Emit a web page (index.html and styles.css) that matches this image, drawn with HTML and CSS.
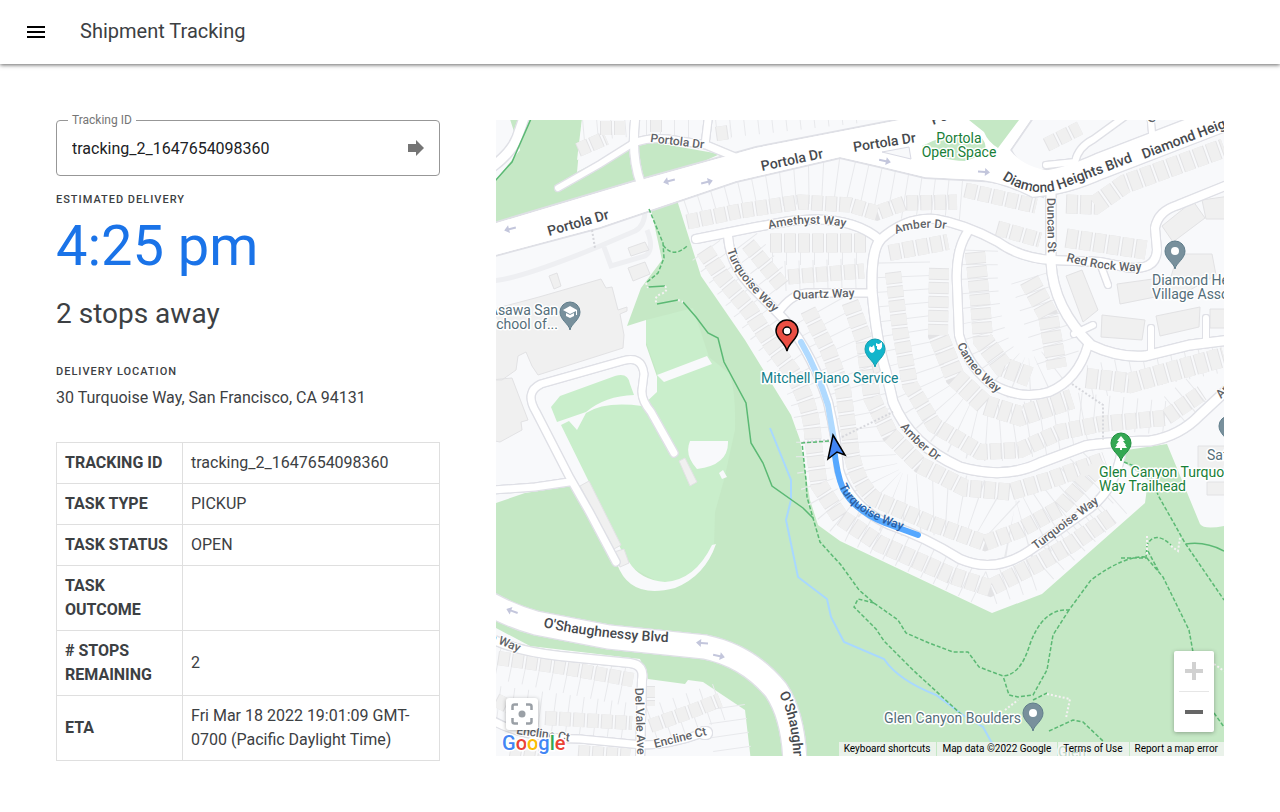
FILE: index.html
```html
<!DOCTYPE html>
<html lang="en">
<head>
<meta charset="utf-8">
<meta name="viewport" content="width=device-width, initial-scale=1">
<title>Shipment Tracking</title>
<link rel="stylesheet" href="styles.css">
</head>
<body>
<header class="topbar">
  <button class="menu-button" type="button" aria-label="Menu">
    <svg width="24" height="24" viewBox="0 0 24 24"><path d="M3 18h18v-2H3v2zm0-5h18v-2H3v2zm0-7v2h18V6H3z"/></svg>
  </button>
  <h1 class="title">Shipment Tracking</h1>
</header>
<main class="content">
  <section class="details">
    <form class="field">
      <label class="field-label" for="tracking">Tracking ID</label>
      <input class="field-input" id="tracking" type="text" value="tracking_2_1647654098360">
      <button class="field-go" type="button" aria-label="Track">
        <svg width="18" height="16" viewBox="0 0 18 16"><path d="M1 4h8V0l8 8-8 8v-4H1z"/></svg>
      </button>
    </form>
    <h2 class="caption">ESTIMATED DELIVERY</h2>
    <p class="time">4:25 pm</p>
    <p class="stops">2 stops away</p>
    <h2 class="caption caption-location">DELIVERY LOCATION</h2>
    <p class="address">30 Turquoise Way, San Francisco, CA 94131</p>
    <table class="facts">
      <tr><th scope="row">TRACKING ID</th><td>tracking_2_1647654098360</td></tr>
      <tr><th scope="row">TASK TYPE</th><td>PICKUP</td></tr>
      <tr><th scope="row">TASK STATUS</th><td>OPEN</td></tr>
      <tr><th scope="row">TASK OUTCOME</th><td></td></tr>
      <tr><th scope="row"># STOPS REMAINING</th><td>2</td></tr>
      <tr><th scope="row">ETA</th><td>Fri Mar 18 2022 19:01:09 GMT-0700 (Pacific Daylight Time)</td></tr>
    </table>
  </section>
  <section class="map" aria-label="Map">
    <svg class="map-canvas" viewBox="496 120 728 636" preserveAspectRatio="xMidYMid slice">
      <defs>
        <g id="roads">
          <path stroke-width="9" d="M526 112L517 138Q511 153 492 167"/>
          <path stroke-width="6" d="M558 188L600 164 635 142"/>
          <path stroke-width="8" d="M636 112Q630 155 641 184"/>
          <path stroke-width="7" d="M633 143Q650 137 668 139L706 145 735 157M709 112L705 145"/>
          <path stroke-width="8" d="M696 239L756 227 790 221Q850 214 880 240Q905 217 935 219Q965 224 998 242Q1020 258 1052 260L1100 262 1125 267Q1156 272 1157 250L1155 228Q1158 211 1178 205L1230 184"/>
          <path stroke-width="9" d="M880 240Q871 251 872 290Q876 340 886 372L893 402Q910 445 960 467Q1005 480 1040 463L1085 446Q1105 442 1150 441Q1180 436 1200 415L1230 387"/>
          <path stroke-width="8" d="M967 233Q955 252 957 285L959 335Q967 364 990 383Q1020 401 1049 392Q1078 380 1088 345"/>
          <path stroke-width="9" d="M1051 190L1051 262Q1053 308 1091 345Q1118 358 1145 356L1190 345 1230 340"/>
          <path stroke-width="6" d="M1151 352V328M1206 340V318M1074 334L1093 325M1101 266L1108 285"/>
          <path stroke-width="7" d="M872 293H807Q791 294 778 313"/>
          <path stroke-width="8" d="M728 236Q730 264 750 285L776 311Q808 342 828 402Q837 440 839 470Q850 507 890 525Q925 537 960 559Q995 574 1029 551L1090 508Q1116 488 1122 449"/>
          <path stroke-width="6" d="M1046 165L1075 162Q1078 147 1094 139L1131 112M1153 143L1150 112"/>
          <path stroke-width="7" d="M616 562L590 513 570 478 536 412Q524 392 541 384L622 361Q642 355 644 374L642 390Q641 400 651 412L674 453M492 490L535 487 569 482"/>
          <path stroke-width="8" d="M490 638Q515 651 560 656L630 663Q645 665 642 680L640 762"/>
          <path stroke-width="7" d="M488 718Q520 738 580 739L642 745Q670 745 700 734"/>
          <path stroke-width="12" d="M704 733h2"/>
          <path stroke-width="23" d="M484 601Q510 616 536 623L609 637 705 647Q748 656 776 690Q794 717 795 765"/>
          <path stroke-width="25" d="M970 166Q1003 168 1035 184Q1065 182 1100 166L1235 114"/>
        </g>
        <g id="lots">
          <path stroke-width="48" d="M685 205Q790 170 850 184T965 202"/>
          <path stroke-width="30" d="M772 250H864M785 276L865 273M745 242L780 288"/>
          <path stroke-width="34" d="M706 250L750 310 790 365Q815 400 813 450T850 525L985 590 1035 573 1120 497"/>
          <path stroke-width="62" d="M820 310Q865 390 865 450T920 505 1000 525 1105 468"/>
          <path stroke-width="56" d="M902 262Q904 360 930 400T1010 432 1085 420"/>
          <path stroke-width="44" d="M976 250Q973 335 1000 365T1060 365L1030 270"/>
          <path stroke-width="34" d="M1080 410L1165 418 1205 385M1090 382L1224 355"/>
          <path stroke-width="38" d="M498 660L632 688M498 705L630 722M652 725L725 700 733 756"/>
          <path stroke-width="22" d="M583 130L628 126M646 128H700M716 128L860 112"/>
        </g>
        <g id="houses">
          <path stroke-width="15" d="M687 222L740 211 800 202 850 205 877 213 905 203 957 202M965 190L1036 206M997 228L1040 240"/>
          <path stroke-width="19" d="M770 243H866M1066 204L1095 205 1125 184 1224 148M1066 238L1146 250"/>
          <path stroke-width="15" d="M788 277L864 271M748 244L783 287"/>
          <path stroke-width="17" d="M704 250L722 277 750 311 772 345 792 372Q812 405 813 440L819 485 840 517 880 544 950 575 990 588 1035 565 1070 545 1112 516"/>
          <path stroke-width="16" d="M808 310L828 350 843 390 850 440Q853 480 875 499L930 523 985 543 1020 530 1060 508 1103 462"/>
          <path stroke-width="17" d="M850 302L864 340 872 398 890 435 920 465 965 488 1010 492 1050 480 1105 460"/>
          <path stroke-width="16" d="M889 253L948 242M893 272L900 330 910 385 934 425 980 452 1020 450 1060 432 1100 424 1165 418 1202 393"/>
          <path stroke-width="20" d="M939 268L938 335 955 377 985 405 1020 416 1072 399"/>
          <path stroke-width="20" d="M975 252L980 300 983 340 1003 367 1030 377M1029 280L1048 315 1057 368"/>
          <path stroke-width="20" d="M1086 378L1130 383 1224 357"/>
          <path stroke-width="14" d="M498 658L560 667 633 680M545 718L632 723M650 726L695 710 720 700M648 686V706M578 752L630 756M496 700L520 712M510 750L545 756"/>
          <path stroke-width="14" d="M578 150L606 138M600 128L625 128M650 125H664M716 134L730 132M1046 145L1080 128"/>
        </g>
        <path id="p-amethyst" d="M769 229Q810 219 850 228"/>
        <path id="p-amber" d="M896 234Q920 224 950 230"/>
        <path id="p-turq1" d="M727 250Q735 279 777 315"/>
        <path id="p-cameo" d="M957 345Q970 375 1004 398"/>
        <path id="p-amber2" d="M900 427Q916 448 945 466"/>
        <path id="p-turq2" d="M839 486Q852 517 915 534"/>
        <path id="p-diamond" d="M1002 179Q1035 201 1068 186L1145 157"/>
        <path id="p-redrock" d="M1066 261Q1110 273 1150 271"/>
        <path id="p-oshau" d="M543 627Q600 640 690 643"/>
        <path id="p-oshau2" d="M779 694Q794 722 794 775"/>
        <path id="pin" d="M0 18C-1 12-10 8-10 0A10 10 0 1 1 10 0C10 8 1 12 0 18z"/>
        <path id="way-arrow" d="M-6 0L-1-4V-1H6V1H-1V4z"/>
      </defs>

      <rect class="land" x="0" y="0" width="1800" height="1400"/>

      <path class="park" d="M507 110H583L577 172 640 140 720 154 640 190 496 224V180L520 150z"/>
      <path class="land" d="M583 110L577 160 634 136 634 110z"/>
      <path class="park" d="M650 205L677 200 701 276 745 340 791 415 800 440 810 500 818 525 840 541 992 613 1042 594 1145 503 1148 480 1124 462 1127 450 1167 444 1200 524Q1204 530 1224 526L1800 526V1400H0V503H496L525 493 572 486 620 562 700 500 646 345V320L627 326 641 288 662 260z"/>
      <path class="field" d="M646 320L693 308 709 357 729 373Q736 390 735 430L724 480 715 512 714 546Q700 580 660 583L629 566 589 482 561 425 569 421 577 430 586 413Q605 401 642 406L657 392V373L646 342z"/>
      <path class="field" d="M551 407L560 396 615 376Q628 372 630 384L634 395Q605 396 586 412L557 422z"/>
      <path class="land" d="M657 375L707 356 712 364 664 382zM690 441H728Q729 465 697 469 684 455 690 441zM617 564L629 562Q640 580 665 582 695 580 712 545L716 544Q705 576 675 588 630 600 617 564zM719 473l4-3 4 7-5 2z"/>
      <path class="land" d="M496 628L530 646 640 659 648 679 685 684 688 680 703 682 745 710 752 770H400V600z"/>

      <g class="drives"><path d="M492 281Q520 279 600 246L635 231Q645 226 645 210M604 247L611 266 645 256Q655 250 647 230"/></g>
      <path class="block" d="M539 297L601 279 606 288 612 287 618 310 627 307 627 311 620 314 624 335 623 348 538 375 532 366 526 352 518 356 516 370 502 380 490 380V310zM490 380L512 378 528 420 521 422 522 430 500 442 490 440zM628 248l17-6 4 8-18 6zM628 268l17-6 5 12-17 7zM549 276l8-3 4 13-7 3zM580 486l9-5 32 64-7 4zM614 552l10-3 5 14-9 4zM679 461l6-3 12 24-7 4z"/>

      <use href="#lots" class="lot-lines"/>
      <use href="#houses" class="house-edges"/>
      <use href="#houses" class="house-fills"/>
      <path class="block" d="M1162 226L1193 201 1205 218 1173 242zM1202 200L1230 196V219H1206zM1117 284L1160 278 1169 283 1178 254H1212L1216 275 1190 290 1120 304zM1066 276L1082 270 1098 310 1083 322zM1102 315L1145 320 1142 340 1101 337zM1156 316L1200 307 1199 327 1160 336zM1210 309H1230V328H1210zM1198 446H1230V471H1198zM1207 482H1230V495H1207zM872 365l9-4 3 9-10 4z"/>

      <path class="highway" d="M480 227L634 181 756 147 905 118 940 105H1042L1011 150Q1020 168 1039 171L1043 197 1000 182 925 178 875 166 840 158 736 182 600 228 480 260z"/>
      <use href="#roads" class="road-edges"/>
      <use href="#roads" class="road-fills"/>
      <path class="highway-fill" d="M480 228L634 182 756 148 905 119 940 106H1040L1010 150Q1025 170 1060 172L1043 195 1000 181 925 177 875 165 840 157 736 181 600 227 480 259z"/>
      <path class="land-edge" d="M882 152L909 147 911 159z"/>
      <path class="park" d="M969 120H1019L998 148Q988 142 984 132zM922 146Q950 131 980 136 996 153 965 161 940 161 922 146z"/>

      <path class="footway" d="M842 437L893 412M1072 384L1103 405V440M592 230L595 248M829 440L803 442"/>
      <path class="creek" d="M770 428L791 480V500L786 520 798 577 827 599 831 617 844 642 884 659Q898 680 936 695L963 715 983 727 993 745"/>
      <path class="trail" d="M534 112L512 162 494 182M683 302L696 317 708 333 718 338 724 362 746 403 751 443 763 463 772 486 803 508 813 518M648 287L665 286M657 304L678 300M1186 544Q1205 541 1224 551"/>
      <path class="trail dashed" d="M649 209L663 243 664 258 658 273 646 283M663 245Q673 259 687 246M829 441L802 443 806 480 807 497 813 518 820 542 841 565 859 590 874 603 898 620 906 633 929 643 953 652H968L979 667 1003 676Q1020 675 1029 647 1042 608 1069 610L1091 580Q1125 555 1146 557L1163 577 1189 630 1193 652M874 603L858 599 854 607 876 629 884 641 913 670 963 716M1069 610L1053 635 1047 670 1033 695 1018 697 1009 695 1003 676M1124 462L1150 472 1158 495 1185 543 1224 600M1121 558H1146L1147 545Q1155 530 1171 545M1148 551L1159 572M1033 700L1047 693M1049 731L1073 720 1083 722 1104 742M1214 713L1224 727"/>
      <path class="dots" d="M1047 694L1070 699 1066 718M1005 710L1018 700M1171 546L1178 551 1180 538M1147 536V556M646 283l2 5M665 286q4 5-4 8t-4 10M678 300l5 2M1214 664l10 7"/>

      <g class="arrows">
        <use href="#way-arrow" transform="translate(510 229) rotate(-14)"/>
        <use href="#way-arrow" transform="translate(669 181) rotate(-14)"/>
        <use href="#way-arrow" transform="translate(707 182) rotate(166)"/>
        <use href="#way-arrow" transform="translate(885 161) rotate(192)"/>
        <use href="#way-arrow" transform="translate(984 172) rotate(184)"/>
        <use href="#way-arrow" transform="translate(512 611) rotate(20)"/>
        <use href="#way-arrow" transform="translate(702 643) rotate(4)"/>
        <use href="#way-arrow" transform="translate(719 656) rotate(192)"/>
      </g>

      <g class="street">
        <text x="650" y="142" transform="rotate(7 650 142)">Portola Dr</text>
        <text><textPath href="#p-amethyst">Amethyst Way</textPath></text>
        <text><textPath href="#p-amber">Amber Dr</textPath></text>
        <text><textPath href="#p-turq1">Turquoise Way</textPath></text>
        <text x="793" y="299" transform="rotate(-2 793 299)">Quartz Way</text>
        <text><textPath href="#p-cameo">Cameo Way</textPath></text>
        <text><textPath href="#p-amber2">Amber Dr</textPath></text>
        <text x="1047" y="198" transform="rotate(89 1047 198)">Duncan St</text>
        <text><textPath href="#p-redrock">Red Rock Way</textPath></text>
        <text x="1036" y="550" transform="rotate(-37 1036 550)">Turquoise Way</text>
        <text x="635" y="688" transform="rotate(88 635 688)">Del Vale Ave</text>
        <text x="655" y="748" transform="rotate(-14 655 748)">Encline Ct</text>
        <text x="516" y="734" transform="rotate(8 516 734)">Encline Ct</text>
        <text x="489" y="640" transform="rotate(22 489 640)">e Way</text>
        <text x="1221" y="399" transform="rotate(-48 1221 399)">Amber Dr</text>
        <text x="1153" y="124" transform="rotate(-60 1153 124)">G</text>
      </g>
      <g class="street major">
        <text x="549" y="236" transform="rotate(-16 549 236)">Portola Dr</text>
        <text x="762" y="171" transform="rotate(-12 762 171)">Portola Dr</text>
        <text x="854" y="152" transform="rotate(-9 854 152)">Portola Dr</text>
        <text x="933" y="125" transform="rotate(-20 933 125)">Portola</text>
        <text><textPath href="#p-diamond">Diamond Heights Blvd</textPath></text>
        <text x="1144" y="159" transform="rotate(-21 1144 159)">Diamond Heights Blvd</text>
        <text><textPath href="#p-oshau">O'Shaughnessy Blvd</textPath></text>
        <text><textPath href="#p-oshau2">O'Shaughnessy</textPath></text>
      </g>

      <path class="route-left" d="M801 342Q817 370 828 405L834 440"/>
      <path class="route" d="M834 448Q837 475 843 489 855 511 885 523L918 535"/>
      <g class="street on-route"><text><textPath href="#p-turq2">Turquoise Way</textPath></text></g>

      <g class="place green" text-anchor="middle">
        <text x="959" y="143">Portola</text><text x="959" y="157">Open Space</text>
      </g>
      <g class="place green">
        <text x="1099" y="477">Glen Canyon Turquoise</text><text x="1099" y="491">Way Trailhead</text>
        <text x="1058" y="757">Glen</text>
      </g>
      <g class="place teal"><text x="761" y="383">Mitchell Piano Service</text></g>
      <g class="place slate">
        <text x="558" y="315" text-anchor="end">Asawa San</text><text x="558" y="329" text-anchor="end">School of...</text>
        <text x="1152" y="285">Diamond Heights</text><text x="1152" y="299">Village Association</text>
        <text x="1207" y="460">Safeway</text>
        <text x="884" y="723">Glen Canyon Boulders</text>
      </g>

      <g class="pin-slate">
        <use href="#pin" x="570" y="312"/><use href="#pin" x="1175" y="251"/><use href="#pin" x="1033" y="713"/><use href="#pin" x="1229" y="426"/>
      </g>
      <g class="glyph">
        <circle cx="1175" cy="251" r="4"/><circle cx="1033" cy="713" r="4"/>
        <path d="M563 310l7-4 7 4v5h-1v-4l-6 3zM566 313l4 2 4-2v3l-4 2-4-2z"/>
      </g>
      <use href="#pin" x="875" y="349" class="pin-teal"/>
      <path class="glyph" d="M869 348l1-2 1 1h1l2-2 1 5q-1 3-3 3t-3-3zM876 343l2 1h1l3-2v5q-1 3-3 3l-2-1v-3h-1z"/>
      <use href="#pin" x="1121" y="443" class="pin-green"/>
      <path class="glyph" d="M1121 436l4 5h-2l3 4h-1l2 3h-5v2h-2v-2h-5l2-3h-1l3-4h-2z"/>

      <path class="destination" d="M787 351C785 342 776 339 776 331A11 11 0 0 1 798 331C798 339 789 342 787 351z"/>
      <circle class="destination-dot" cx="787" cy="331" r="4"/>
      <path class="vehicle" d="M833 435L845 455 837 452 828 459z"/>
    </svg>

    <button class="locate" type="button" aria-label="Center map">
      <svg width="24" height="24" viewBox="0 0 24 24"><path fill="none" stroke="#9aa0a6" stroke-width="2.500" d="M2.500 8V4.500Q2.500 2.500 4.500 2.500H8M16 2.500h3.500q2 0 2 2V8M21.500 16v3.500q0 2-2 2H16M8 21.500H4.500q-2 0-2-2V16"/><circle cx="12" cy="12" r="3.500" fill="#9aa0a6"/></svg>
    </button>
    <a class="brand" href="#" aria-label="Google"><span class="b">G</span><span class="r">o</span><span class="y">o</span><span class="b">g</span><span class="g">l</span><span class="r">e</span></a>
    <div class="zoom">
      <button type="button" disabled aria-label="Zoom in"><svg width="18" height="18" viewBox="0 0 18 18"><path d="M7 0h4v7h7v4h-7v7H7v-7H0V7h7z"/></svg></button>
      <button type="button" aria-label="Zoom out"><svg width="18" height="18" viewBox="0 0 18 18"><path d="M0 7h18v4H0z"/></svg></button>
    </div>
    <div class="credits">
      <button type="button">Keyboard shortcuts</button>
      <span>Map data ©2022 Google</span>
      <a href="#">Terms of Use</a>
      <a href="#">Report a map error</a>
    </div>
  </section>
</main>
</body>
</html>
```

FILE: styles.css
```css
* { box-sizing: border-box; }
body { margin: 0; background: #fff; color: #3c4043; font: 16px/24px Roboto, sans-serif; }
h1, h2, p { margin: 0; }
button { margin: 0; padding: 0; border: 0; background: none; font: inherit; color: inherit; cursor: pointer; }
svg { display: block; }

.topbar { position: relative; display: flex; align-items: center; gap: 20px; height: 64px; padding: 0 12px; background: #fff; box-shadow: 0 1px 4px rgba(0, 0, 0, .6); }
.menu-button { display: grid; place-items: center; width: 48px; height: 48px; color: #000; }
.title { font-size: 20px; line-height: 28px; font-weight: 400; padding-bottom: 2px; }

.content { display: flex; gap: 56px; align-items: flex-start; padding: 56px 56px 48px; }
.details { flex: 0 0 384px; }

.field { position: relative; display: flex; align-items: center; height: 56px; padding: 0 14px 0 15px; border: 1px solid #979797; border-radius: 4px; }
.field-label { position: absolute; top: -9px; left: 11px; padding: 0 4px; background: #fff; color: #757575; font-size: 12px; line-height: 16px; }
.field-input { flex: 1; min-width: 0; padding: 2px 0 0; border: 0; outline: 0; background: none; color: #202124; font: inherit; }
.field-go { fill: #757575; }

.caption { margin-top: 17px; font-size: 11px; line-height: 14px; font-weight: 500; letter-spacing: 1px; }
.time { margin-top: 7px; color: #1a73e8; font-size: 56px; line-height: 64px; }
.stops { margin-top: 16px; font-size: 28px; line-height: 40px; }
.caption-location { margin-top: 31px; }
.address { margin-top: 7px; }

.facts { width: 100%; margin-top: 32px; border-collapse: collapse; }
.facts th, .facts td { padding: 8px; border: 1px solid #dfdfdf; text-align: left; vertical-align: middle; }
.facts th { width: 126px; font-weight: 700; }

.map { position: relative; flex: 1; min-width: 0; height: calc(100vh - 176px); min-height: 400px; overflow: hidden; }
.map-canvas { width: 100%; height: 100%; }

.land { fill: #f8f9fb; }
.land-edge { fill: #f8f9fb; stroke: #d9dae4; }
.park { fill: #c5e8c5; }
.field { fill: #c9eecb; }
.block { fill: #f0f0f0; stroke: #e2e2e4; }
.drives { fill: none; stroke: #eeeff2; stroke-width: 5; }
#roads, #lots, #houses { fill: none; }
.lot-lines { stroke: #e8e9ec; stroke-dasharray: 1 13; }
.house-edges { stroke: #e3e3e5; stroke-dasharray: 12 2; }
.house-fills { stroke: #f0f0f0; stroke-dasharray: 10 4; stroke-dashoffset: -1; }
.road-edges { stroke: #dfe0e6; stroke-linecap: round; filter: drop-shadow(0 1px 0 #dfe0e6) drop-shadow(0 -1px 0 #dfe0e6) drop-shadow(1px 0 0 #dfe0e6) drop-shadow(-1px 0 0 #dfe0e6); }
.road-fills { stroke: #fff; stroke-linecap: round; }
.highway { fill: #fff; stroke: #dfe0e6; stroke-width: 2; }
.highway-fill { fill: #fff; }
.footway { fill: none; stroke: #d6d7dc; stroke-width: 2; stroke-dasharray: 2 2; }
.creek { fill: none; stroke: #a8d8ff; stroke-width: 2; }
.trail { fill: none; stroke: #5bb974; stroke-width: 1.500; }
.dashed { stroke-dasharray: 4 2; }
.dots { fill: none; stroke: #f5f1f3; stroke-width: 2; stroke-dasharray: 2 2; }
.arrows { fill: #c3c6dc; }

.street { fill: #5f6368; stroke: #fff; stroke-width: 2px; paint-order: stroke; stroke-linejoin: round; font-size: 12px; font-weight: 500; }
.major { fill: #46494e; font-size: 14px; }
.on-route { fill: #2a5fa3; stroke: none; }
.place { stroke: #fff; stroke-width: 3px; paint-order: stroke; stroke-linejoin: round; font-size: 14px; }
.green { fill: #188038; }
.teal { fill: #12808c; }
.slate { fill: #546e7a; }
.pin-slate { fill: #78909c; stroke: #607d8b; stroke-width: 1px; }
.pin-teal { fill: #12b5cb; stroke: #129eaf; }
.pin-green { fill: #34a853; stroke: #1e8e3e; }
.glyph { fill: #fff; }
.route-left, .route { fill: none; stroke-width: 6; stroke-linecap: round; }
.route-left { stroke: #b0daff; }
.route { stroke: #56a8ff; }
.destination { fill: #ea4f43; stroke: #000; stroke-width: 1.500; }
.destination-dot { fill: #fff; stroke: #000; stroke-width: 1.500; }
.vehicle { fill: #4285f4; stroke: #000; stroke-width: 1.500; }

.locate { position: absolute; left: 10px; bottom: 26px; display: grid; place-items: center; width: 32px; height: 32px; border-radius: 3px; background: #fff; box-shadow: 0 1px 4px rgba(0, 0, 0, .3); }
.brand { position: absolute; left: 6px; bottom: 1px; font-size: 20px; line-height: 24px; font-weight: 500; text-decoration: none; -webkit-text-stroke: 3px #fff; paint-order: stroke; }
.b { color: #4285f4; }
.r { color: #ea4335; }
.y { color: #fbbc04; }
.g { color: #34a853; }
.zoom { position: absolute; right: 10px; bottom: 24px; width: 40px; border-radius: 2px; background: #fff; box-shadow: 0 1px 4px rgba(0, 0, 0, .3); }
.zoom button { display: grid; place-items: center; width: 40px; height: 40px; fill: #666; }
.zoom button:disabled { fill: #d1d1d1; }
.zoom button + button::before { content: ""; position: absolute; top: 40px; left: 5px; width: 30px; height: 1px; background: #e6e6e6; }
.zoom button + button { height: 41px; }
.credits { position: absolute; right: 0; bottom: 0; display: flex; gap: 1px; color: #000; font-size: 10px; line-height: 14px; white-space: nowrap; }
.credits > * { padding: 0 6px 0 5px; background: rgba(245, 245, 245, .75); color: #000; font-size: 10px; line-height: 14px; text-decoration: none; }
```
